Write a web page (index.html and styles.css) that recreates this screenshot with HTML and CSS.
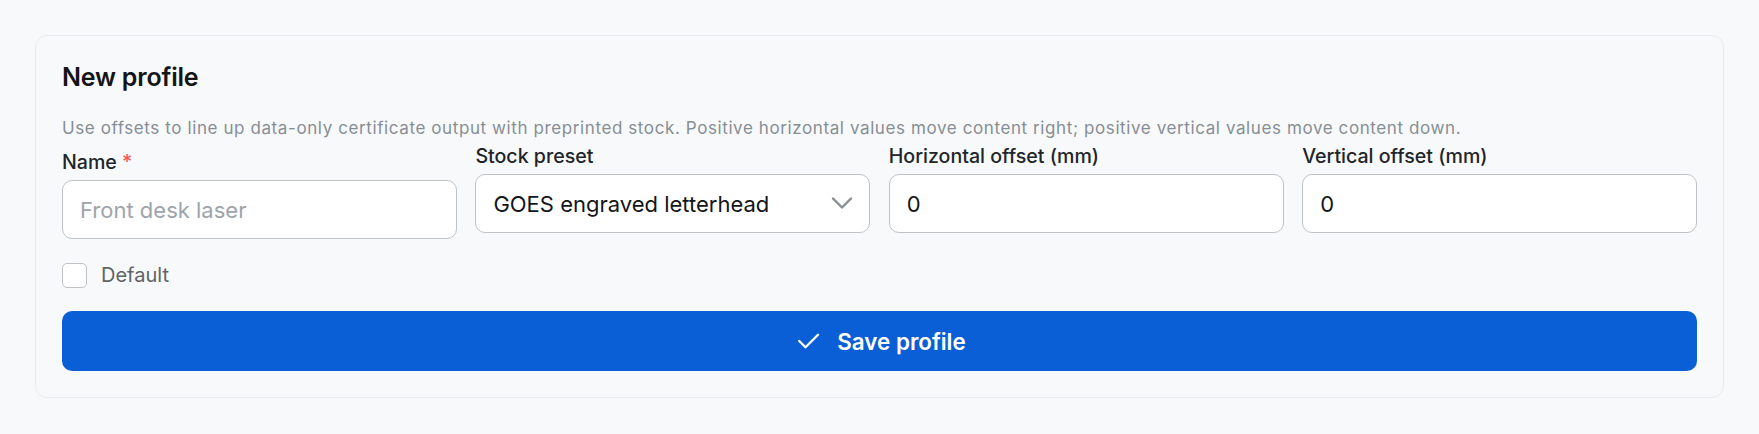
FILE: index.html
```html
<!DOCTYPE html>
<html lang="en">
  <head>
    <meta charset="UTF-8" />
    <meta name="viewport" content="width=device-width, initial-scale=1.0" />
    <title>Print profiles</title>
    <link rel="stylesheet" href="styles.css">
  </head>

  <body>
    <div class="card">
      <form action="" method="post">
        <h2 class="title">New profile</h2>
        <p class="hint">
          Use offsets to line up data-only certificate output with preprinted stock. Positive horizontal values move content right; positive vertical values move content down.
        </p>

        <div class="fields">
          <div class="field">
            <label class="label req" for="name">Name <span class="star">*</span></label>
            <input type="text" id="name" class="input" name="name" placeholder="Front desk laser" />
          </div>
          <div class="field">
            <label class="label" for="stock">Stock preset</label>
            <div class="select-wrap">
              <select id="stock" class="input select" name="stock">
                <option>GOES engraved letterhead</option>
                <option>Plain stock</option>
              </select>
              <svg class="chevron" viewBox="0 0 24 24" width="36" height="36" fill="none" stroke="currentColor" stroke-width="1.6" stroke-linecap="round" stroke-linejoin="round">
                <path d="M6 9l6 6l6 -6" />
              </svg>
            </div>
          </div>
          <div class="field">
            <label class="label" for="offx">Horizontal offset (mm)</label>
            <input type="text" id="offx" class="input" name="offset_x" value="0" />
          </div>
          <div class="field">
            <label class="label" for="offy">Vertical offset (mm)</label>
            <input type="text" id="offy" class="input" name="offset_y" value="0" />
          </div>
        </div>

        <label class="check">
          <input type="checkbox" class="box" name="default" />
          <span>Default</span>
        </label>

        <button type="submit" class="save">
          <svg viewBox="0 0 24 24" width="30" height="30" fill="none" stroke="currentColor" stroke-width="1.9" stroke-linecap="round" stroke-linejoin="round">
            <path d="M5 12l5 5l10 -10" />
          </svg>
          Save profile
        </button>
      </form>
    </div>
  </body>
</html>
```

FILE: styles.css
```css
body {
  margin: 0;
  padding: 35px 35px 0;
  background-color: #f8f9fa;
  font-family: Inter, "Liberation Sans", sans-serif;
  color: #212529;
}

.card {
  background-color: #f8f9fa;
  border: 1px solid #e9ecef;
  border-radius: 12px;
  padding: 26px;
}

.title {
  margin: 0;
  font-size: 25px;
  line-height: 30px;
  font-weight: 600;
  color: #141517;
  letter-spacing: -0.2px;
}

.hint {
  margin: 23px 0 0;
  font-size: 17px;
  line-height: 26px;
  letter-spacing: 0.6px;
  color: #868e96;
}

.fields {
  display: grid;
  grid-template-columns: repeat(4, 1fr);
  column-gap: 18.5px;
  align-items: start;
}

.label {
  display: block;
  font-size: 19.6px;
  line-height: 30px;
  font-weight: 500;
  color: #212529;
  margin-bottom: 3px;
}

.label.req {
  padding-top: 6px;
}

.star {
  color: #fa5252;
}

.input {
  display: block;
  width: 100%;
  height: 59px;
  box-sizing: border-box;
  border: 1px solid #bfc3c8;
  border-radius: 10px;
  background-color: white;
  padding: 0 17px;
  font-family: inherit;
  font-size: 22px;
  color: #141517;
}

.input::placeholder {
  color: #9ea4aa;
}

.select-wrap {
  position: relative;
}

.select {
  appearance: none;
  padding-right: 50px;
}

.chevron {
  position: absolute;
  right: 10px;
  top: 11px;
  color: #868e96;
  pointer-events: none;
}

.check {
  display: flex;
  align-items: center;
  gap: 14px;
  margin-top: 21px;
  font-size: 20px;
  line-height: 31px;
  color: #5f6368;
}

.box {
  appearance: none;
  margin: 0;
  width: 25px;
  height: 25px;
  border: 1px solid #bfc3c8;
  border-radius: 5px;
  background-color: white;
}

.save {
  display: flex;
  align-items: center;
  justify-content: center;
  gap: 14px;
  width: 100%;
  height: 60px;
  margin-top: 20px;
  border: none;
  border-radius: 10px;
  background-color: #0b5fd6;
  color: white;
  font-family: inherit;
  font-size: 22.4px;
  font-weight: 600;
}
```
